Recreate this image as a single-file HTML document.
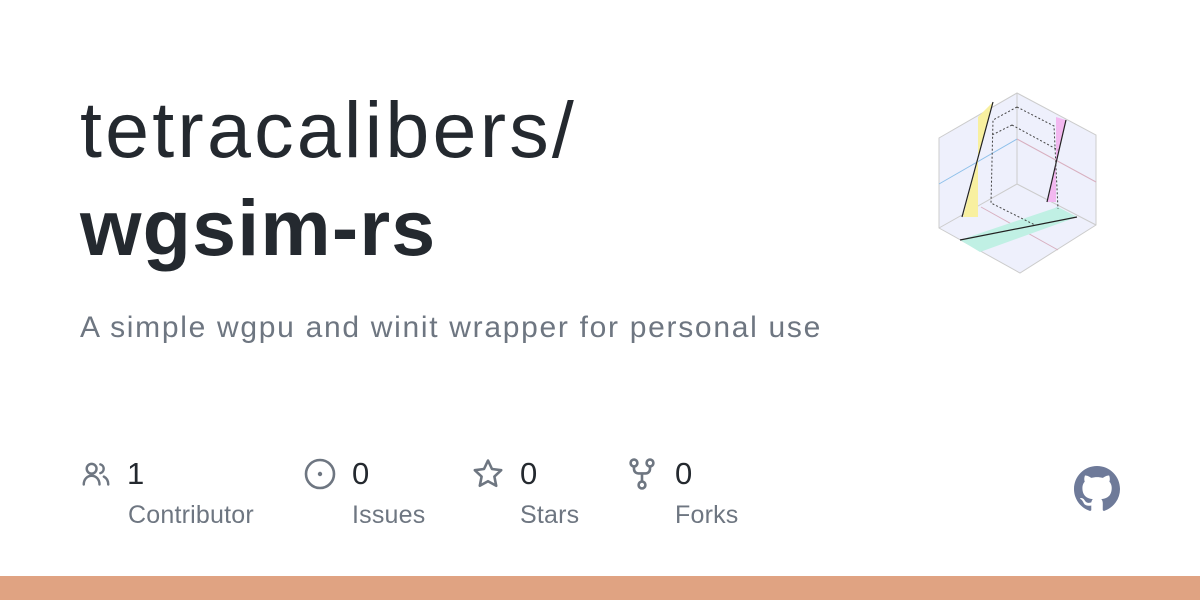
<!DOCTYPE html>
<html><head><meta charset="utf-8"><style>
body{margin:0;width:1200px;height:600px;background:#fff;position:relative;overflow:hidden;font-family:"Liberation Sans",sans-serif;}
.t{position:absolute;left:80px;color:#24292f;white-space:nowrap;}
.n{position:absolute;top:456px;font-size:31px;color:#24292f;}
.l{position:absolute;top:501px;font-size:25px;letter-spacing:0.2px;color:#6e7681;}
svg.i{position:absolute;}
</style></head><body>
<div class="t" style="top:84px;font-size:79px;letter-spacing:3.2px;">tetracalibers/</div>
<div class="t" style="top:182px;font-size:79px;font-weight:bold;letter-spacing:1.2px;">wgsim-rs</div>
<div class="t" style="top:311px;font-size:30px;letter-spacing:1.7px;color:#6e7681;">A simple wgpu and winit wrapper for personal use</div>

<svg class="i" style="left:80px;top:460px" width="32" height="28" viewBox="0 0 16 16" fill="none" stroke="#6e7681" stroke-width="1.4" stroke-linecap="round"><circle cx="5.5" cy="5" r="2.8"/><path d="M1 14c0-3 2-5 4.5-5s4.5 2 4.5 5"/><path d="M10.5 2.5a2.6 2.6 0 0 1 0 5M12.5 9.5c1.5.8 2.5 2.4 2.5 4.5"/></svg>
<div class="n" style="left:127px">1</div><div class="l" style="left:128px">Contributor</div>

<svg class="i" style="left:304px;top:458px" width="32" height="32" viewBox="0 0 32 32" fill="none" stroke="#6e7681" stroke-width="2.6"><circle cx="16" cy="16" r="14"/><circle cx="16" cy="16" r="2.2" fill="#6e7681" stroke="none"/></svg>
<div class="n" style="left:352px">0</div><div class="l" style="left:352px">Issues</div>

<svg class="i" style="left:472px;top:458px" width="32" height="32" viewBox="0 0 16 16" fill="none" stroke="#6e7681" stroke-width="1.3" stroke-linejoin="round"><path d="M8 1.3l2 4.2 4.6.6-3.4 3.2.9 4.6L8 11.6l-4.1 2.3.9-4.6L1.4 6.1 6 5.5z"/></svg>
<div class="n" style="left:520px">0</div><div class="l" style="left:520px">Stars</div>

<svg class="i" style="left:628px;top:458px" width="28" height="32" viewBox="0 0 14 16" fill="none" stroke="#6e7681" stroke-width="1.3"><circle cx="3" cy="2.5" r="1.7"/><circle cx="11" cy="2.5" r="1.7"/><circle cx="7" cy="13.5" r="1.7"/><path d="M3 4.2v1.3c0 1.3 1 2.2 2.2 2.2h3.6c1.2 0 2.2-.9 2.2-2.2V4.2M7 7.7v4.1"/></svg>
<div class="n" style="left:675px">0</div><div class="l" style="left:675px">Forks</div>

<svg class="i" style="left:1074px;top:466px" width="46" height="46" viewBox="0 0 16 16"><path fill="#6e7a99" d="M8 0C3.580 0 0 3.580 0 8c0 3.540 2.290 6.530 5.470 7.590.4.07.55-.17.55-.38 0-.19-.01-.82-.01-1.490-2.010.37-2.530-.49-2.690-.94-.09-.23-.48-.94-.82-1.130-.28-.15-.68-.52-.01-.53.63-.01 1.080.58 1.230.82.72 1.210 1.870.87 2.330.66.07-.52.28-.87.51-1.070-1.780-.2-3.640-.89-3.640-3.950 0-.87.31-1.590.82-2.150-.08-.2-.36-1.020.08-2.120 0 0 .67-.21 2.200.82.64-.18 1.320-.27 2-.27.68 0 1.360.09 2 .27 1.530-1.040 2.200-.82 2.200-.82.44 1.100.16 1.920.08 2.120.51.56.82 1.270.82 2.150 0 3.070-1.870 3.750-3.650 3.950.29.25.54.73.54 1.480 0 1.070-.01 1.930-.01 2.200 0 .21.15.46.55.38A8.013 8.013 0 0016 8c0-4.420-3.580-8-8-8z"/></svg>

<svg class="i" style="left:0;top:0" width="1200" height="600">
<polygon points="1017,93 1096,135 1096,225 1020,273 939,228 939,138" fill="#eef0fc" stroke="#ccc" stroke-width="1"/>
<path d="M1017,93 L1017,184 M939,228 L1017,184 L1096,225" stroke="#ccc" fill="none"/>
<path d="M939,184 L1017,139 M981,251 L1058,207" stroke="#8ec0ea" fill="none"/>
<path d="M1017,139 L1096,182 M981,207 L1058,250" stroke="#d8b0c0" fill="none"/>
<polygon points="978,117 993,102 963,217 978,217" fill="#f8f0a0"/>
<polygon points="1056,117 1066,120 1047,202 1056,202" fill="#f2b8f0"/>
<polygon points="960,240 980,252 1077,217 1058,207" fill="#c0f0e4"/>
<path d="M993,102 L962,217 M1066,120 L1047,202 M960,240 L1077,217" stroke="#222" stroke-width="1.2"/>
<path d="M1017,107 L1054,126 L1058,209 M1017,107 L993,120 L991,203 L1035,225 M1012,125 L992,135 M1012,125 L1058,150" stroke="#444" stroke-dasharray="2,2" fill="none"/>
</svg>
<div style="position:absolute;left:0;top:576px;width:1200px;height:24px;background:#e0a382"></div>
</body></html>
